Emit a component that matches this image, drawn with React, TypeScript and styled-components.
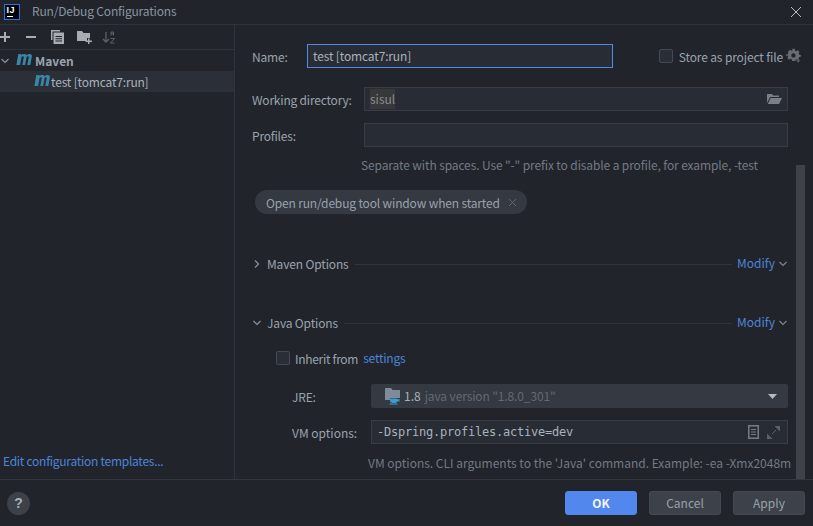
import React from "react";
import styled, { createGlobalStyle } from "styled-components";

const Global = createGlobalStyle`
  html, body { margin: 0; padding: 0; background: #21242b; }
  #root { width: 813px; height: 526px; }
  * { box-sizing: border-box; }
`;
const Dialog = styled.div`
  width: 813px; height: 526px; overflow: hidden; background: #21242b; color: #a9b2bc;
  font-family: "Noto Sans CJK KR", "Noto Sans", sans-serif; font-size: 12px; line-height: 16px;
  display: flex; flex-direction: column;
`;
const TitleBar = styled.div`
  height: 25px; flex: none; display: flex; align-items: center; padding: 0 11px 1px 4px; border-bottom: 1px solid #2f333b;
`;
const AppLogo = styled.div`
  width: 16px; height: 16px; background: #000; border: 1.5px solid #1f7ae0; flex: none; position: relative;
  color: #fff; font: bold 9px/9px "Liberation Sans", sans-serif; padding: 1.5px 0 0 1.5px; letter-spacing: 0.6px;
  &::after { content: ""; position: absolute; left: 1.5px; bottom: 1.5px; width: 6px; height: 1px; background: #fff; }
`;
const TitleText = styled.div`
  margin: -2px 0 0 12px; flex: 1; color: #8a94a0; letter-spacing: -0.17px;
`;
const Body = styled.div`flex: 1; display: flex; min-height: 0;`;
const Sidebar = styled.div`
  width: 235px; flex: none; border-right: 1px solid #2f333b; display: flex; flex-direction: column;
`;
const Toolbar = styled.div`
  height: 25px; flex: none; border-bottom: 1px solid #2f333b; display: grid; grid-template-columns: repeat(5, 25.6px); align-items: center;
  svg { display: block; }
`;
const TreeRow = styled.div<{ $selected?: boolean; $indent: number }>`
  height: 21px; display: flex; align-items: center; padding-left: ${p => p.$indent}px;
  background: ${p => (p.$selected ? "#2b2f37" : "transparent")};
  color: #a9b2bc; white-space: nowrap;
`;
const TreeChevron = styled.span`display: block; width: 16px; flex: none; svg { display: block; }`;
const TreeLabel = styled.span<{ $bold?: boolean }>`
  font-weight: ${p => (p.$bold ? 700 : 400)}; margin: 1px 0 0 ${p => (p.$bold ? 3 : 1)}px; color: ${p => (p.$bold ? "#9aa3ad" : "#a9b2bc")};
  letter-spacing: ${p => (p.$bold ? 0 : -0.18)}px;
`;
const MavenIcon = styled.svg`
  display: block; flex: none; width: 16px; height: 11px; margin-top: -3px; fill: #3a86a8;
`;
const Spacer = styled.div`flex: 1;`;
const TemplatesLink = styled.a`
  display: block; padding: 0 0 10px 3px; color: #4d84d8; letter-spacing: -0.27px;
`;
const Main = styled.div`
  flex: 1; position: relative; padding: 19px 25px 0 17px; min-width: 0; overflow: hidden;
`;
const NameRow = styled.div`display: flex; align-items: center; height: 24px;`;
const Label = styled.div<{ $width?: number; $loose?: boolean }>`
  width: ${p => p.$width ?? 55}px; flex: none; color: #9aa3ad; white-space: nowrap; margin-top: 2px;
  letter-spacing: ${p => (p.$loose ? 0 : -0.2)}px;
`;
const NameInput = styled.div`
  width: 306px; height: 24px; flex: none; border: 1px solid #5389e6; background: #282c34; padding: 0 5px; display: flex; align-items: center; color: #a9b2bc; letter-spacing: -0.15px;
`;
const Checkbox = styled.div`
  width: 14px; height: 14px; flex: none; border: 1px solid #444a53; border-radius: 2px; background: #2a2e36;
`;
const StoreBox = styled.div`
  margin: 0 -14px 0 auto; display: flex; align-items: center; color: #9aa3ad; white-space: nowrap;
  span { margin: 1px 0 0 6px; letter-spacing: -0.13px; }
  svg { margin-left: 3px; display: block; }
`;
const FieldRow = styled.div<{ $top: number; $indent?: number }>`
  display: flex; align-items: center; margin: ${p => p.$top}px 0 0 ${p => p.$indent ?? 0}px; height: 24px;
`;
const FieldBox = styled.div<{ $mono?: boolean }>`
  flex: 1; height: 24px; background: #282c34; border: 1px solid #383c44; display: flex; align-items: center; gap: 8px; padding: 0 ${p => (p.$mono ? 7 : 5)}px 0 5px; min-width: 0;
  ${p => p.$mono ? `font-family: "DejaVu Sans Mono", monospace; letter-spacing: -0.22px; color: #a9b2bc;` : ""}
  svg { display: block; flex: none; }
`;
const Highlight = styled.span`background: #37383a; color: #8a8d90; height: 20px; line-height: 20px;`;
const PushRight = styled.span`flex: 1;`;
const Hint = styled.div<{ $left: number; $top: number; $tight?: boolean }>`
  margin: ${p => p.$top}px 0 0 ${p => p.$left}px; color: #727a84; white-space: nowrap;
  letter-spacing: ${p => (p.$tight ? -0.12 : 0)}px;
`;
const Chip = styled.div`
  margin: 17px 0 0 3px; height: 24px; width: 272px; border-radius: 12px; background: #353941; color: #99a2ac; display: flex; align-items: center; padding: 0 10px 0 11px; white-space: nowrap; justify-content: space-between;
  span { letter-spacing: -0.16px; margin-top: 1px; }
`;
const Section = styled.div<{ $top: number }>`
  display: flex; align-items: center; height: 18px; margin-top: ${p => p.$top}px; svg { display: block; flex: none; }
`;
const SectionTitle = styled.span`margin-left: 5px; color: #9aa3ad; white-space: nowrap; letter-spacing: -0.15px;`;
const Rule = styled.div`flex: 1; height: 1px; background: #31353d; margin: 0 5px 0 6px;`;
const ModifyLink = styled.span`color: #4d84d8; white-space: nowrap; margin: -3px 3px 0 0;`;
const InheritRow = styled.div`
  display: flex; align-items: center; margin: 17px 0 0 24px; height: 18px;
`;
const InheritText = styled.span`margin: 2px 0 0 5px; color: #9aa3ad; letter-spacing: -0.3px;`;
const SettingsLink = styled.span`margin-left: 5px; color: #4d84d8; letter-spacing: -0.2px;`;
const JreBox = styled.div`
  flex: 1; height: 24px; background: #353941; border-radius: 2px; display: flex; align-items: center; padding: 0 11px 0 14px; svg { display: block; flex: none; }
`;
const JreVersion = styled.span`margin-left: 4px; color: #a9b2bc;`;
const JreDesc = styled.span`margin-left: 4px; color: #626a74; letter-spacing: -0.12px;`;
const Scrollbar = styled.div`
  position: absolute; right: 8px; top: 140px; bottom: 0; width: 9px; background: #3f4248;
`;
const Footer = styled.div`
  height: 47px; flex: none; border-top: 1px solid #33373f; display: flex; align-items: center; padding: 0 8px 0 7px; gap: 12px;
`;
const Help = styled.div`
  width: 23px; height: 23px; border-radius: 50%; background: #3d4149; color: #a9b2bc; font: bold 14px/23px "Liberation Sans", sans-serif; text-align: center; margin-right: auto;
`;
const Button = styled.div<{ $primary?: boolean }>`
  width: 72px; height: 24px; border-radius: 3px; text-align: center; line-height: 22px;
  background: ${p => (p.$primary ? "#5288ee" : "#3d4149")};
  color: ${p => (p.$primary ? "#f2f5fa" : "#99a2ac")};
  font-weight: ${p => (p.$primary ? 700 : 400)};
  border: 1px solid ${p => (p.$primary ? "#5288ee" : "#454952")};
`;

const Chevron = ({ open, color = "#8b939c" }: { open?: boolean; color?: string }) => (
  <svg width="10" height="10" viewBox="0 0 10 10" fill="none" stroke={color} strokeWidth="1.2">
    {open ? <path d="M1.5 3l3.5 3.5L8.5 3" /> : <path d="M3 1.5L6.500 5 3 8.500" />}
  </svg>
);

const Maven = () => (
  <MavenIcon viewBox="0 0 16 11">
    <path d="M2.300 0H5.200L5 1C6.200.2 7.500 0 8.300 0c1.200 0 2 .4 2.300 1.200C11.700.3 12.800 0 13.700 0c1.700 0 2.500 1.100 2.100 2.800L14.300 11h-3l1.400-7.600c.2-.9-.1-1.200-.7-1.200-.5 0-1 .2-1.400.6L9.100 11H6.300l1.400-7.600c.2-.9-.1-1.200-.7-1.200-.5 0-1 .2-1.400.6L4.100 11H.4z" />
  </MavenIcon>
);

export default function App() {
  return (
    <Dialog>
      <Global />
      <TitleBar>
        <AppLogo>IJ</AppLogo>
        <TitleText>Run/Debug Configurations</TitleText>
        <svg width="12" height="12" viewBox="0 0 12 12" stroke="#b8bec5" strokeWidth="1"><path d="M1 1l10 10M11 1L1 11" /></svg>
      </TitleBar>
      <Body>
        <Sidebar>
          <Toolbar>
            <svg width="10" height="10" viewBox="0 0 10 10" fill="#a8adb3"><path d="M4 0h2v4h4v2H6v4H4V6H0V4h4z" /></svg>
            <svg width="10" height="10" viewBox="0 0 10 10" fill="#a8adb3"><rect y="4" width="10" height="2" /></svg>
            <svg width="13" height="14" viewBox="0 0 13 14" fill="#a8adb3"><path d="M0 0h9v1.500H1.500V10H0z" /><path fillRule="evenodd" d="M2.500 2.500H13V14H2.500zM4.500 6v1H11V6zM4.500 8.200v1H11v-1zM4.500 10.400v1H11v-1z" /></svg>
            <svg width="15" height="14" viewBox="0 0 15 14" fill="#a8adb3"><path d="M0 1h5l1.500 2H13v5h-3v3H0z" /><path d="M11 8.500h1.500V10.500H15V12h-2.500v2H11v-2H8.500v-1.500H11z" /></svg>
            <svg width="14" height="14" viewBox="0 0 14 14" fill="none" stroke="#5d6269" strokeWidth="1.300"><path d="M4 2v10M1 9l3 3 3-3" /><path d="M9 5.500V2h2.500v3.500M9 3.800h2.500" strokeWidth="1" /><path d="M8.500 8.500h4l-4 4.500h4" strokeWidth="1" /></svg>
          </Toolbar>
          <TreeRow $indent={0}>
            <TreeChevron><Chevron open /></TreeChevron>
            <Maven />
            <TreeLabel $bold>Maven</TreeLabel>
          </TreeRow>
          <TreeRow $indent={34} $selected>
            <Maven />
            <TreeLabel>test [tomcat7:run]</TreeLabel>
          </TreeRow>
          <Spacer />
          <TemplatesLink>Edit configuration templates...</TemplatesLink>
        </Sidebar>
        <Main>
          <NameRow>
            <Label>Name:</Label>
            <NameInput>test [tomcat7:run]</NameInput>
            <StoreBox>
              <Checkbox />
              <span>Store as project file</span>
              <svg width="16" height="16" viewBox="0 0 16 16" fill="#686d74"><path fillRule="evenodd" d="M6 1h3l.4 2 1.300.6L12.500 2.500l2 2-1.100 1.800.6 1.300 2 .4v2l-2 .4-.6 1.300 1.100 1.800-2 2-1.800-1.100-1.300.6L9 15H6l-.4-2-1.300-.6-1.800 1.100-2-2 1.100-1.800-.6-1.300L-1 9.500v-2l2-.4.6-1.300L1.500 4l2-2 1.800 1.100 1.300-.6zM7.500 6a2.500 2.500 0 100 5 2.500 2.500 0 000-5z" transform="translate(.9 0) scale(.87)" /><path d="M9.500 12h5.500L12.200 15z" stroke="#21242b" strokeWidth=".8" /></svg>
            </StoreBox>
          </NameRow>
          <FieldRow $top={19}>
            <Label $width={112}>Working directory:</Label>
            <FieldBox>
              <Highlight>sisul</Highlight>
              <PushRight />
              <svg width="15" height="12" viewBox="0 0 15 12" fill="#7b8087"><path d="M0 1h5l1 1.500h6V4H3L0 10zM3.600 5H15l-3 6H.8z" /></svg>
            </FieldBox>
          </FieldRow>
          <FieldRow $top={12}>
            <Label $width={112}>Profiles:</Label>
            <FieldBox />
          </FieldRow>
          <Hint $left={109} $top={10} $tight>Separate with spaces. Use "-" prefix to disable a profile, for example, -test</Hint>
          <Chip>
            <span>Open run/debug tool window when started</span>
            <svg width="9" height="9" viewBox="0 0 9 9" stroke="#5f656e" strokeWidth="1"><path d="M1 1l7 7M8 1L1 8" /></svg>
          </Chip>
          <Section $top={41}>
            <Chevron />
            <SectionTitle>Maven Options</SectionTitle>
            <Rule />
            <ModifyLink>Modify</ModifyLink>
            <Chevron open color="#7d848c" />
          </Section>
          <Section $top={41}>
            <Chevron open />
            <SectionTitle>Java Options</SectionTitle>
            <Rule />
            <ModifyLink>Modify</ModifyLink>
            <Chevron open color="#7d848c" />
          </Section>
          <InheritRow>
            <Checkbox />
            <InheritText>Inherit from</InheritText>
            <SettingsLink>settings</SettingsLink>
          </InheritRow>
          <FieldRow $top={17} $indent={40}>
            <Label $width={79}>JRE:</Label>
            <JreBox>
              <svg width="15" height="17" viewBox="0 0 15 17"><path fill="#7e8c9a" d="M0 0h6l1.500 2H15v8H5v2H0z" /><path fill="#3a9bd1" d="M5 10.500h7v.5h2.500v2.500H12c-.3 1-1 1.500-2 1.500H7.500c-1.300 0-2.500-1.200-2.500-2.500zM12 12h1.300v-.3H12z" /><rect x="4.500" y="15.500" width="8" height="1" fill="#3a9bd1" /></svg>
              <JreVersion>1.8</JreVersion>
              <JreDesc>java version "1.8.0_301"</JreDesc>
              <PushRight />
              <svg width="9" height="5" viewBox="0 0 9 5" fill="#b5bac0"><path d="M0 0h9L4.500 5z" /></svg>
            </JreBox>
          </FieldRow>
          <FieldRow $top={12} $indent={40}>
            <Label $width={79} $loose>VM options:</Label>
            <FieldBox $mono>
              -Dspring.profiles.active=dev
              <PushRight />
              <svg width="11" height="14" viewBox="0 0 11 14" fill="none" stroke="#777c83" strokeWidth="1.500"><rect x=".75" y=".75" width="9.500" height="12.500" /><path d="M3 4.500h5M3 7h5M3 9.500h5" strokeWidth="1" /></svg>
              <svg width="13" height="13" viewBox="0 0 13 13" fill="#5c6168"><path d="M7.500 0H13v5.500zM0 7.500L5.500 13H0z" /><path d="M9 4L5 8" stroke="#5c6168" /></svg>
            </FieldBox>
          </FieldRow>
          <Hint $left={116} $top={11}>VM options. CLI arguments to the 'Java' command. Example: -ea -Xmx2048m</Hint>
          <Scrollbar />
        </Main>
      </Body>
      <Footer>
        <Help>?</Help>
        <Button $primary>OK</Button>
        <Button>Cancel</Button>
        <Button>Apply</Button>
      </Footer>
    </Dialog>
  );
}
